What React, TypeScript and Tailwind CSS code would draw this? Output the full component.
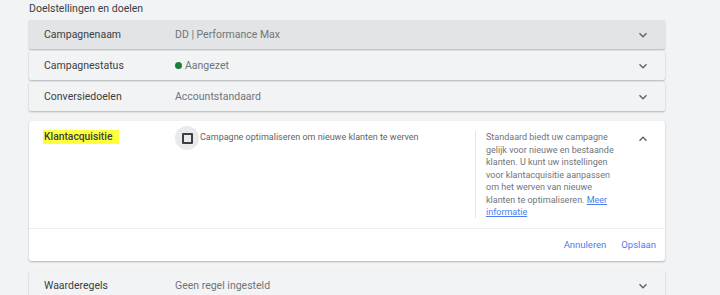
import React from "react";

const Chevron = ({ up = false }: { up?: boolean }) => (
  <svg width="14" height="14" viewBox="0 0 24 24" className="text-[#5f6368]">
    <path
      d={up ? "M6 15l6-6 6 6" : "M6 9l6 6 6-6"}
      fill="none"
      stroke="currentColor"
      strokeWidth="2.4"
    />
  </svg>
);

const Row = ({
  label,
  value,
  dark = false,
  dot = false,
}: {
  label: string;
  value: string;
  dark?: boolean;
  dot?: boolean;
}) => (
  <div
    className={`flex items-center h-[29px] rounded-[2px] shadow-[0_1px_2px_rgba(60,64,67,0.35)] ${
      dark ? "bg-[#e2e4e6]" : "bg-[#f1f3f4]"
    }`}
  >
    <div className="w-[146px] pl-[15px] text-[10.5px] text-[#3c4043]">{label}</div>
    <div className="flex-1 flex items-center gap-[3px] text-[10.5px] text-[#70757a]">
      {dot && <span className="w-[7px] h-[7px] rounded-full bg-[#188038]" />}
      {value}
    </div>
    <div className="w-[44px] flex justify-center">
      <Chevron />
    </div>
  </div>
);

export default function App() {
  return (
    <div
      className="w-[720px] h-[295px] overflow-hidden bg-[#f1f3f4] pl-[29px] pr-[55px]"
      style={{ fontFamily: "Roboto, 'Noto Sans', sans-serif" }}
    >
      <div className="h-[18px] pt-[1px] text-[10.5px] text-[#3c4043]">Doelstellingen en doelen</div>
      <div className="mt-[2px] flex flex-col gap-[2px]">
        <Row label="Campagnenaam" value="DD | Performance Max" dark />
        <Row label="Campagnestatus" value="Aangezet" dot />
        <Row label="Conversiedoelen" value="Accountstandaard" />
      </div>

      <div className="mt-[10px] bg-white rounded-[3px] shadow-[0_1px_2px_rgba(60,64,67,0.35)]">
        <div className="flex h-[108px] border-b border-[#eceeef]">
          <div className="w-[146px] pl-[14px] pt-[9px] flex items-start">
            <span className="block text-[10.3px] font-medium leading-[14px] text-[#3c4043] bg-[#ffff3b] pl-[1px] pr-[7px]">
              Klantacquisitie
            </span>
          </div>
          <div className="w-[300px] pt-[5px] flex items-start">
            <div className="w-[24px] h-[24px] rounded-full bg-[#e8eaeb] flex items-center justify-center">
              <div className="w-[11px] h-[11px] border-[2px] border-[#3c4043] rounded-[1px]" />
            </div>
            <span className="text-[9px] text-[#5f6368] ml-[1px] mt-[5px]">
              Campagne optimaliseren om nieuwe klanten te werven
            </span>
          </div>
          <div className="pt-[10px] pb-[10px]">
            <div className="h-full border-l border-[#e3e5e7] pl-[10px] w-[142px] text-[9px] leading-[12.5px] text-[#70757a]">
              Standaard biedt uw campagne gelijk voor nieuwe en bestaande klanten. U kunt uw instellingen voor klantacquisitie aanpassen om het werven van nieuwe klanten te optimaliseren.{" "}
              <span className="text-[#4a7ef0] underline">Meer</span>{" "}
              <span className="text-[#4a7ef0] underline">informatie</span>
            </div>
          </div>
          <div className="flex-1 flex justify-center pt-[11px] pl-[4px]">
            <Chevron up />
          </div>
        </div>
        <div className="h-[32px] flex items-center justify-end gap-[15px] pr-[9px] text-[9.5px] text-[#4a7ef0]">
          <span>Annuleren</span>
          <span>Opslaan</span>
        </div>
      </div>

      <div className="mt-[10px] flex flex-col">
        <Row label="Waarderegels" value="Geen regel ingesteld" />
      </div>
    </div>
  );
}
